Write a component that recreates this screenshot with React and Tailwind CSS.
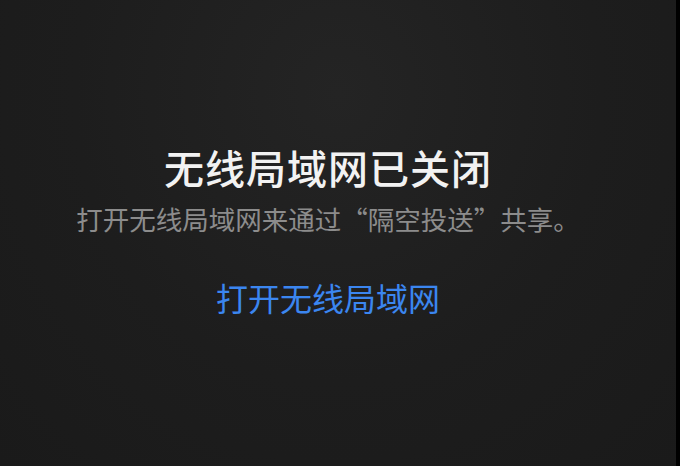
export default function App() {
  return (
    <div
      className="flex h-[466px] w-[680px] overflow-hidden"
      style={{ fontFamily: '"Noto Sans CJK SC", "Noto Sans", sans-serif' }}
    >
      <div className="flex flex-1 flex-col items-center bg-[radial-gradient(ellipse_at_50%_20%,#242424_0%,#1d1d1d_55%,#1a1a1a_100%)] pr-[20px] pt-[143px]">
        <h1 className="text-[40px] font-medium leading-[48px] tracking-[1px] text-[#f2f2f2]">
          无线局域网已关闭
        </h1>
        <p className="mt-[12px] text-[26.5px] leading-[32px] text-[#8c8c8c]">
          打开无线局域网来通过“隔空投送”共享。
        </p>
        <button className="mt-[43px] text-[32px] leading-[38px] text-[#3b86f0]">
          打开无线局域网
        </button>
      </div>
      <div className="w-[4px] bg-black" />
    </div>
  );
}
